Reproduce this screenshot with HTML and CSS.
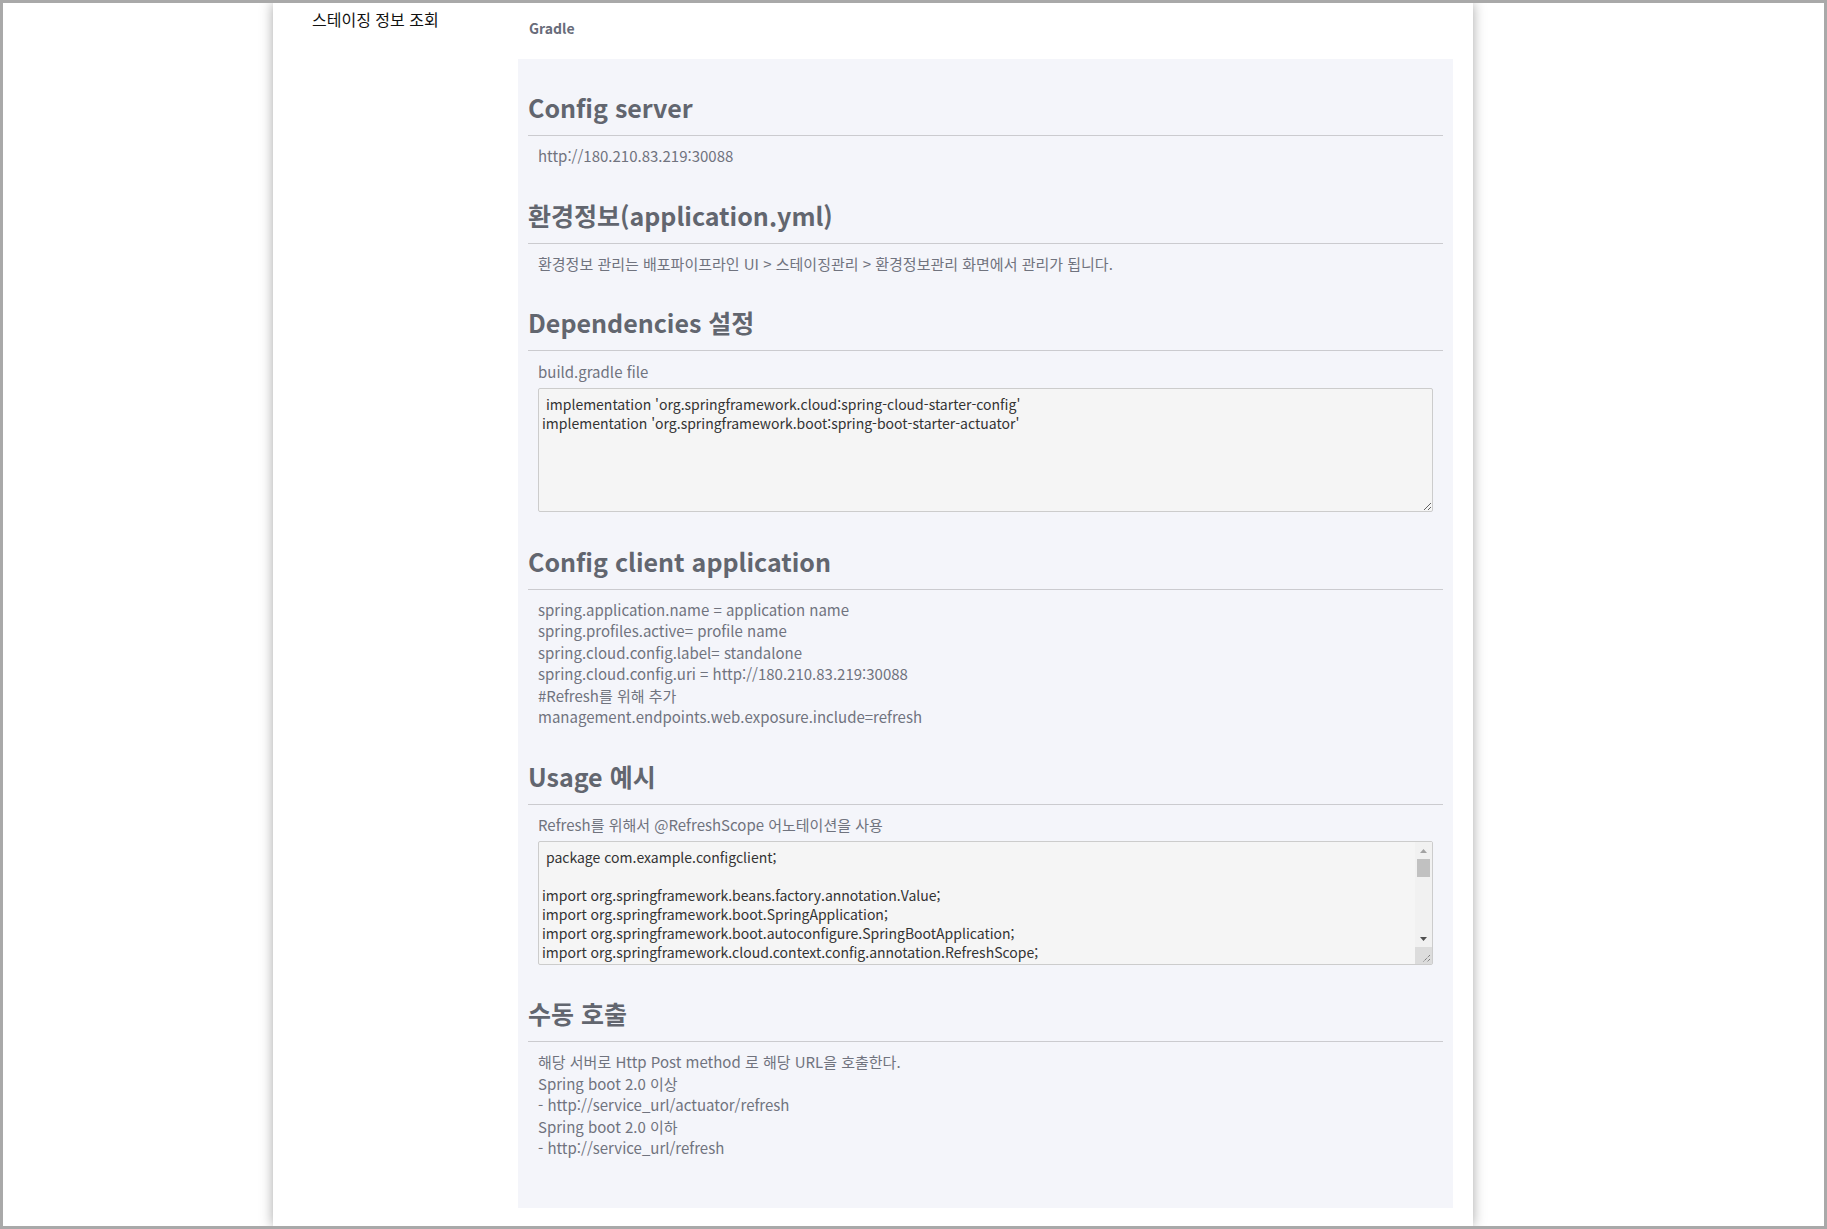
FILE: index.html
```html
<!DOCTYPE html>
<html lang="ko">
<head>
<meta charset="utf-8">
<title>스테이징 정보 조회</title>
<link rel="stylesheet" href="styles.css">
</head>
<body>
<div class="frame">
  <div class="panel">
    <aside class="sidebar">
      <div class="side-title">스테이징 정보 조회</div>
    </aside>
    <main class="main">
      <div class="tab">Gradle</div>
      <div class="content">
        <section class="section">
          <h2 class="sec-title">Config server</h2>
          <div class="sec-body">
            <p class="text">http://180.210.83.219:30088</p>
          </div>
        </section>
        <section class="section">
          <h2 class="sec-title">환경정보(application.yml)</h2>
          <div class="sec-body">
            <p class="text">환경정보 관리는 배포파이프라인 UI &gt; 스테이징관리 &gt; 환경정보관리 화면에서 관리가 됩니다.</p>
          </div>
        </section>
        <section class="section roomy">
          <h2 class="sec-title">Dependencies 설정</h2>
          <div class="sec-body">
            <p class="text">build.gradle file</p>
            <div class="code-wrap">
              <textarea class="code" readonly> implementation 'org.springframework.cloud:spring-cloud-starter-config'
implementation 'org.springframework.boot:spring-boot-starter-actuator'</textarea>
            </div>
          </div>
        </section>
        <section class="section">
          <h2 class="sec-title">Config client application</h2>
          <div class="sec-body">
            <p class="text">spring.application.name = application name<br>spring.profiles.active= profile name<br>spring.cloud.config.label= standalone<br>spring.cloud.config.uri = http://180.210.83.219:30088<br>#Refresh를 위해 추가<br>management.endpoints.web.exposure.include=refresh</p>
          </div>
        </section>
        <section class="section">
          <h2 class="sec-title">Usage 예시</h2>
          <div class="sec-body">
            <p class="text">Refresh를 위해서 @RefreshScope 어노테이션을 사용</p>
            <div class="code-wrap wide">
              <textarea class="code scroll" readonly> package com.example.configclient;

import org.springframework.beans.factory.annotation.Value;
import org.springframework.boot.SpringApplication;
import org.springframework.boot.autoconfigure.SpringBootApplication;
import org.springframework.cloud.context.config.annotation.RefreshScope;
import org.springframework.web.bind.annotation.RequestMapping;
import org.springframework.web.bind.annotation.RestController;

@SpringBootApplication
public class ConfigClientApplication {

    public static void main(String[] args) {
        SpringApplication.run(ConfigClientApplication.class, args);
    }
}

@RefreshScope
@RestController
class MessageRestController {

    @Value("${message:Hello default}")
    private String message;

    @RequestMapping("/message")
    String getMessage() {
        return this.message;
    }
}</textarea>
              <div class="vscroll" aria-hidden="true">
                <div class="sb-btn">
                  <svg width="7" height="4" viewBox="0 0 7 4"><polygon points="0,4 7,4 3.5,0" fill="#a3a3a3"/></svg>
                </div>
                <div class="sb-track"><div class="sb-thumb"></div></div>
                <div class="sb-btn">
                  <svg width="7" height="4" viewBox="0 0 7 4"><polygon points="0,0 7,0 3.5,4" fill="#505050"/></svg>
                </div>
                <div class="sb-corner">
                  <svg width="17" height="17" viewBox="0 0 17 17"><path d="M15 8 L8 15 M15 12 L12 15" stroke="#555" stroke-width="1" stroke-dasharray="1 1" fill="none"/></svg>
                </div>
              </div>
            </div>
          </div>
        </section>
        <section class="section last">
          <h2 class="sec-title">수동 호출</h2>
          <div class="sec-body">
            <p class="text">해당 서버로 Http Post method 로 해당 URL을 호출한다.<br>Spring boot 2.0 이상<br>- http://service_url/actuator/refresh<br>Spring boot 2.0 이하<br>- http://service_url/refresh</p>
          </div>
        </section>
      </div>
    </main>
  </div>
</div>
</body>
</html>
```
FILE: styles.css
```css
* { box-sizing: border-box; }
html, body { margin: 0; padding: 0; }
body {
  font-family: "Noto Sans CJK KR", "Noto Sans", sans-serif;
  background: #ffffff;
}
.frame {
  width: 1827px;
  height: 1229px;
  border: 3px solid #a9a9a9;
  overflow: hidden;
  background: #ffffff;
}
.panel {
  margin-left: 270px;
  width: 1200px;
  height: 100%;
  background: #ffffff;
  box-shadow: 0 0 12px rgba(0, 0, 0, 0.35);
  display: flex;
}
.sidebar {
  width: 245px;
  flex: 0 0 245px;
  padding: 5px 0 0 39px;
}
.side-title {
  font-size: 16px;
  color: #111;
  line-height: 23px;
}
.main {
  flex: 1;
  padding-right: 20px;
}
.tab {
  font-size: 14px;
  font-weight: bold;
  color: #686c7a;
  padding: 14px 0 0 11px;
  line-height: 22px;
  height: 56px;
}
.content {
  background: #f4f5fa;
  padding: 29px 10px 19px;
  min-height: 1149px;
}
.section { margin-bottom: 29px; }
.section.roomy { margin-bottom: 30px; }
.section.roomy .sec-body { padding-top: 10px; }
.section.last { margin-bottom: 0; }
.sec-title {
  margin: 0;
  font-size: 25px;
  font-weight: bold;
  line-height: 38px;
  color: #62666f;
  padding-bottom: 9px;
  border-bottom: 1px solid #cbcbcf;
}
.sec-body {
  padding: 9px 10px 0;
}
.text {
  margin: 0;
  font-size: 15px;
  line-height: 21.5px;
  color: #70737e;
}
.code-wrap {
  position: relative;
  margin-top: 5px;
}
.code-wrap.wide { margin-top: 6px; }
.code {
  display: block;
  width: 100%;
  height: 124px;
  padding: 6px 3px;
  font-family: "Noto Sans CJK KR", "Noto Sans", sans-serif;
  font-size: 14px;
  line-height: 19px;
  color: #333;
  background: #f5f5f5;
  border: 1px solid #cccccc;
  border-radius: 2px;
  resize: vertical;
  outline: none;
}
.code.scroll {
  overflow: hidden;
  padding-right: 20px;
}
.vscroll {
  position: absolute;
  top: 1px;
  right: 1px;
  bottom: 1px;
  width: 17px;
  display: flex;
  flex-direction: column;
  background: #f1f1f1;
}
.sb-btn {
  height: 17px;
  flex: 0 0 17px;
  display: flex;
  align-items: center;
  justify-content: center;
}
.sb-btn svg { display: block; }
.sb-track {
  flex: 1;
  padding: 0 2px;
}
.sb-thumb {
  height: 18px;
  background: #c1c1c1;
}
.sb-corner {
  height: 17px;
  flex: 0 0 17px;
  background: #dcdcdc;
}
.sb-corner svg { display: block; }
```
